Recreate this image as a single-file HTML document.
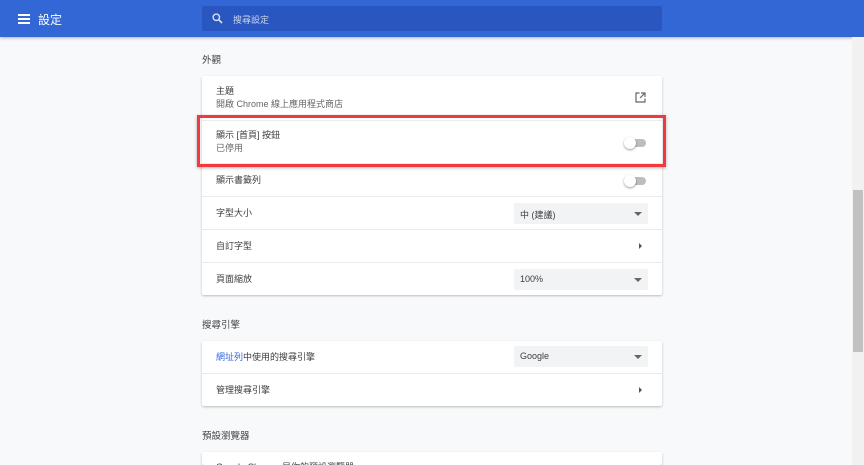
<!DOCTYPE html>
<html style="overflow:hidden;width:864px;height:465px"><head><meta charset="utf-8"><style>
*{margin:0;padding:0;box-sizing:border-box}
body{width:864px;height:465px;overflow:hidden;background:#f8f9fa;font-family:"Liberation Sans","Noto Sans CJK TC",sans-serif;font-size:9px;color:#3c3c3c;position:relative}
.hdr{position:absolute;left:0;top:0;width:864px;height:37px;background:#3367d6;box-shadow:0 1px 3px rgba(0,0,0,.3)}
.abs{position:absolute}
.card{position:absolute;left:202px;width:460px;background:#fff;border-radius:2px;box-shadow:0 1px 2px rgba(0,0,0,.25);overflow:hidden}
.row{position:absolute;left:0;width:460px;border-top:1px solid #ebebeb}
.row .t{position:absolute;left:14px}
.sec{position:absolute;left:202px;font-size:9.5px;color:#444}
.sel{position:absolute;left:312px;width:134px;height:21px;background:#f1f3f4;border-radius:2px}
.sel span{position:absolute;left:6px;top:5px}
.sel i{position:absolute;right:6px;top:9px;border-left:4px solid transparent;border-right:4px solid transparent;border-top:4px solid #666}
.tog{position:absolute;left:423px;width:21px;height:8px;background:#bdbdbd;border-radius:4px}
.tog:after{content:"";position:absolute;left:-1px;top:-2px;width:12px;height:12px;border-radius:50%;background:#fff;box-shadow:0 1px 2px rgba(0,0,0,.4)}
.arr{position:absolute;left:437px;border-top:3px solid transparent;border-bottom:3px solid transparent;border-left:3px solid #555}
</style></head><body>
<div class="hdr">
<div class="abs" style="left:18px;top:14px;width:12px;height:2px;background:#fff;box-shadow:0 4px 0 #fff,0 8px 0 #fff"></div>
<div class="abs" style="left:38px;top:11px;color:#fff;font-size:12px">設定</div>
<div class="abs" style="left:202px;top:6px;width:460px;height:25px;background:#2a56c0;border-radius:2px">
<svg class="abs" style="left:10px;top:7px" width="11" height="11" viewBox="0 0 11 11"><circle cx="4.3" cy="4.3" r="3.2" fill="none" stroke="#dbe3f6" stroke-width="1.4"/><path d="M6.8 6.8L10 10" stroke="#dbe3f6" stroke-width="1.6"/></svg>
<div class="abs" style="left:31px;top:7px;color:#c9d5f0;font-size:9px">搜尋設定</div></div>
</div>
<div class="abs" style="left:852px;top:37px;width:12px;height:428px;background:#f1f1f1"></div>
<div class="abs" style="left:853px;top:190px;width:10px;height:162px;background:#c1c1c1"></div>

<div class="sec" style="top:52px">外觀</div>
<div class="card" style="top:76px;height:219px">
<div class="row" style="top:0;height:44px;border:0"><div class="t" style="top:8px">主題</div><div class="t" style="top:21px;color:#666">開啟 Chrome 線上應用程式商店</div>
<svg class="abs" style="left:433px;top:16px" width="11" height="11" viewBox="0 0 11 11" fill="none" stroke="#666" stroke-width="1.2"><path d="M4.5 1H1v9h9V6.5M6 1h4v4M10 1L5 6"/></svg></div>
<div class="row" style="top:44px;height:43px"><div class="t" style="top:7px">顯示 [首頁] 按鈕</div><div class="t" style="top:20px;color:#666">已停用</div><div class="tog" style="top:18px"></div></div>
<div class="row" style="top:87px;height:33px"><div class="t" style="top:9px">顯示書籤列</div><div class="tog" style="top:13px"></div></div>
<div class="row" style="top:120px;height:33px"><div class="t" style="top:9px">字型大小</div><div class="sel" style="top:6px"><span>中 (建議)</span><i></i></div></div>
<div class="row" style="top:153px;height:33px"><div class="t" style="top:9px">自訂字型</div><div class="arr" style="top:13px"></div></div>
<div class="row" style="top:186px;height:33px"><div class="t" style="top:9px">頁面縮放</div><div class="sel" style="top:6px"><span>100%</span><i></i></div></div>
</div>
<div class="abs" style="left:197px;top:115px;width:469px;height:52px;border:3px solid #f03a3f;box-shadow:0 1px 3px rgba(0,0,0,.3)"></div>

<div class="sec" style="top:317px">搜尋引擎</div>
<div class="card" style="top:341px;height:65px">
<div class="row" style="top:0;height:33px;border:0"><div class="t" style="top:9px"><span style="color:#3367d6">網址列</span>中使用的搜尋引擎</div><div class="sel" style="top:5px"><span>Google</span><i></i></div></div>
<div class="row" style="top:32px;height:33px"><div class="t" style="top:9px">管理搜尋引擎</div><div class="arr" style="top:13px"></div></div>
</div>
<div class="sec" style="top:428px">預設瀏覽器</div>
<div class="card" style="top:452px;height:13px"><div class="abs" style="left:14px;top:8px">Google Chrome 是你的預設瀏覽器</div></div>
</body></html>
